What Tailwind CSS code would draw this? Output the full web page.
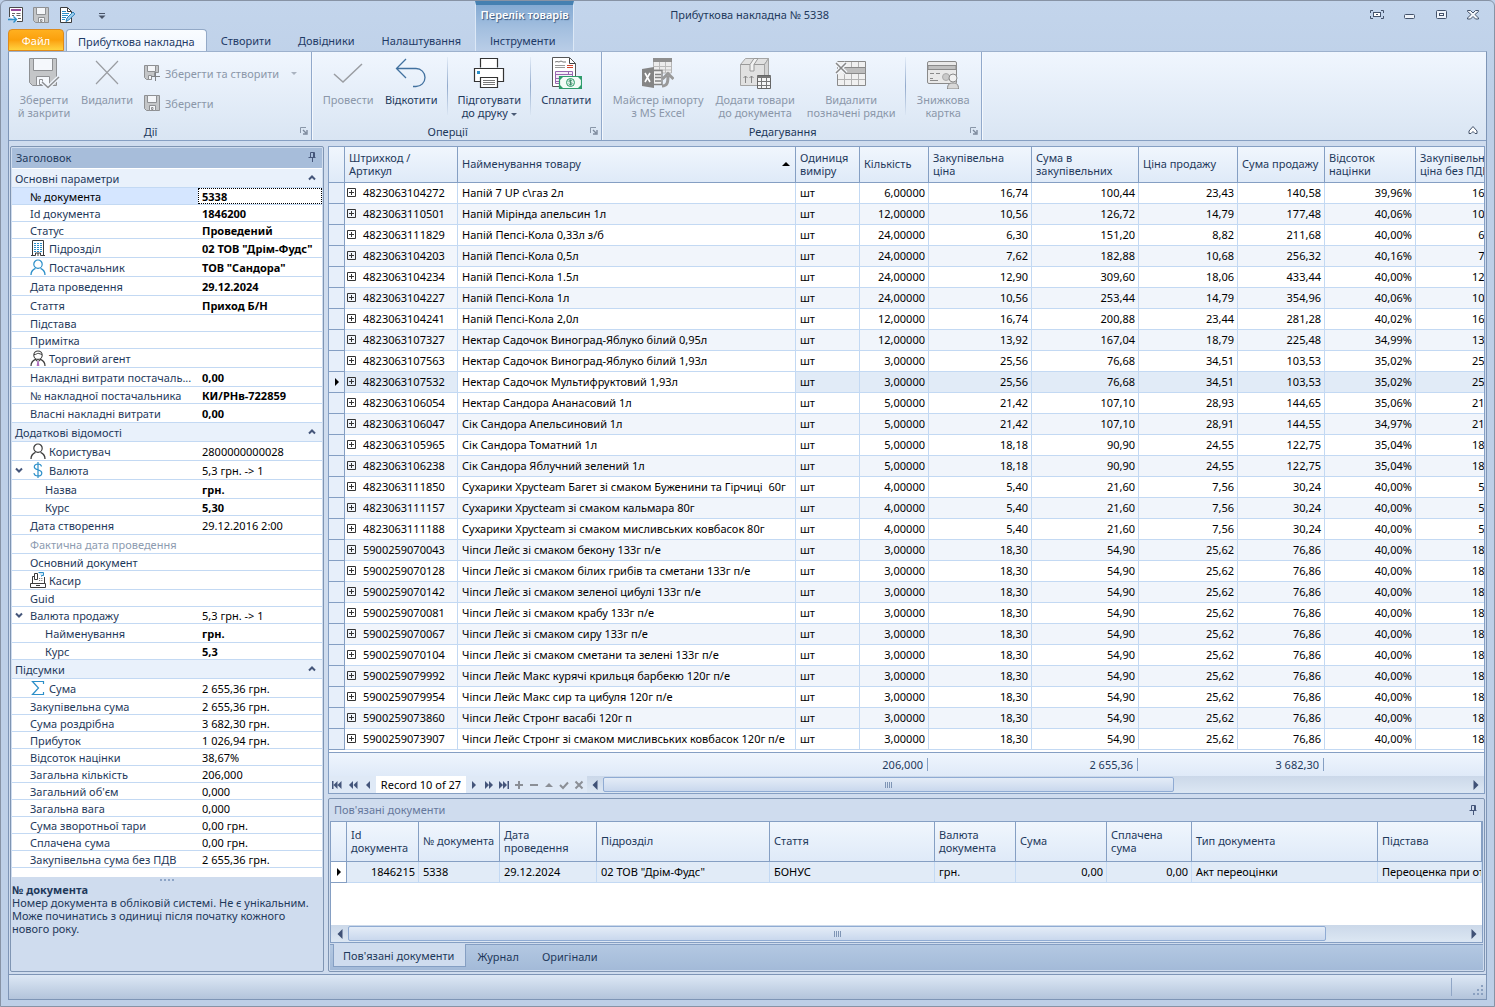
<!DOCTYPE html>
<html lang="uk">
<head>
<meta charset="utf-8">
<title>Прибуткова накладна № 5338</title>
<script src="https://cdn.jsdelivr.net/npm/@tailwindcss/browser@4"></script>
</head>
<body class="bg-[#bed0e8] font-['Noto_Sans',sans-serif] text-[11px] leading-[13px] text-[#1e395b]">
<svg class="hidden" xmlns="http://www.w3.org/2000/svg">
  <symbol id="floppy" viewBox="0 0 16 16"><path d="M.5.5h15v15h-13l-2-2z" fill="#c4c6c8" stroke="#8e9093"/><path d="M3.500.5h9v7h-9z" fill="#f4f6f9" stroke="#8e9093"/><path d="M5.500 10.500h6v5h-6z" fill="#f4f6f9" stroke="#8e9093"/><path d="M7.500 12.500h1.500v2h-1.500z" fill="none" stroke="#8e9093"/></symbol>
  <symbol id="person" viewBox="0 0 16 16"><circle cx="8" cy="5.200" r="4.200" fill="none" stroke="currentColor" stroke-width="1.200"/><path d="M1 16c0-4 2-5.500 4.500-6.600M15 16c0-4-2-5.500-4.500-6.600" fill="none" stroke="currentColor" stroke-width="1.300"/></symbol>
  <symbol id="agent" viewBox="0 0 16 16"><path d="M7.300 11l-.6 5h2.600l-.6-5z" fill="#b06fc0"/><circle cx="8" cy="5.200" r="4.200" fill="none" stroke="#3c3c3c" stroke-width="1.100"/><path d="M4 4.500c2 .3 3-1.200 4.200-1.200S11 4.500 12 4.500" fill="none" stroke="#3c3c3c"/><path d="M1 16c0-4 2-5.500 4.500-6.600l1.800 1.800M15 16c0-4-2-5.500-4.500-6.600l-1.800 1.800" fill="none" stroke="#3c3c3c" stroke-width="1.200"/></symbol>
  <symbol id="building" viewBox="0 0 16 16"><path d="M2.500 15V.5h11V15M1 15.500h4.500v-2.500h5v2.500H15M8 13v3" fill="none" stroke="#3c3c3c"/><path d="M4 3.500h2M7 3.500h2M10 3.500h2M4 5.500h2M7 5.500h2M10 5.500h2M4 7.500h2M7 7.500h2M10 7.500h2M4 9.500h2M7 9.500h2M10 9.500h2M4 11.500h2M7 11.500h2M10 11.500h2" stroke="#2b8fc9"/></symbol>
  <symbol id="dollar" viewBox="0 0 16 16"><path d="M11.500 4.500C11.200 2.800 9.800 2 8 2 5.800 2 4.300 3.200 4.300 4.900 4.300 8.500 11.800 7 11.800 10.900 11.800 12.800 10.200 14 8 14 5.800 14 4.200 13 4 11M8 0v16" fill="none" stroke="#2b8fc9" stroke-width="1.200"/></symbol>
  <symbol id="cash" viewBox="0 0 16 16"><path d="M.5 11.500h15v4H.5zM2.500 11V4.500h2M14.500 11V5M6 13.500h4" fill="none" stroke="#3c3c3c"/><path d="M4.500 1.500h3v6h-3z" fill="#fff" stroke="#3c3c3c"/><path d="M8.500.5h5v3h-2v1" fill="#cfe6f5" stroke="#2b8fc9"/><path d="M9 6.500h4M9 8.500h4" stroke="#777" stroke-dasharray="1 .8"/></symbol>
  <symbol id="sigma" viewBox="0 0 16 16"><path d="M13.500 4V1.500H2.500L8.500 8l-6 6.500h11V12" fill="none" stroke="#2b8fc9" stroke-width="1.200"/></symbol>
  <symbol id="pin" viewBox="0 0 8 10"><path d="M2.500 5V.5h4V5M5.500 1v4M.5 5.500h7M4.500 6v4" fill="none" stroke="#45567a"/></symbol>
  <symbol id="launcher" viewBox="0 0 8 8"><path d="M.5 6V.5H6" fill="none" stroke="#8996a8"/><path d="M3 3l3 3M7 3v4H3" fill="none" stroke="#7c899c" stroke-width="1.400"/></symbol>
  <symbol id="up" viewBox="0 0 8 6"><path d="M1 4.500L4 1.500l3 3" fill="none" stroke="#45567a" stroke-width="2"/></symbol>
  <symbol id="down" viewBox="0 0 8 6"><path d="M1 1.500l3 3 3-3" fill="none" stroke="#45567a" stroke-width="2"/></symbol>
  <symbol id="left" viewBox="0 0 6 10"><path d="M5.500 0v10L.5 5z" fill="#3f5176"/></symbol>
  <symbol id="right" viewBox="0 0 6 10"><path d="M.5 0v10l5-5z" fill="#3f5176"/></symbol>
</svg>

<div class="flex min-h-screen flex-col rounded-t-md border border-[#8793a5] bg-linear-to-b from-[#c3d5ec] to-[#bdcfe7] to-10% px-[7px] pb-[6px]">

  <!-- Title bar and tabs -->
  <header class="flex h-[50px] items-stretch">
    <div class="flex flex-col">
      <div class="flex h-7 items-center">
        <button class="h-4 w-4" aria-label="Перейти"><svg class="h-4 w-4" viewBox="0 0 16 16"><path d="M1.500 10V.5h13v14H9" fill="#fff" stroke="#4a4a4a"/><path d="M3 3h10" stroke="#96479a" stroke-width="2"/><path d="M4 6.500h3M4 8.500h2M8.500 6.500h4M8.500 8.500h4M10 11.500h3" stroke="#666"/><path d="M0 12.500h8M5.500 9.500l3 3-3 3" fill="none" stroke="#2b8fc9" stroke-width="1.400"/></svg></button>
        <button class="ml-[9px] h-4 w-4" aria-label="Зберегти" disabled><svg class="h-4 w-4"><use href="#floppy"/></svg></button>
        <button class="ml-[10px] h-4 w-4" aria-label="Редагувати"><svg class="h-4 w-4" viewBox="0 0 16 16"><path d="M1.500.5h7l4 4v11h-11z" fill="#fff" stroke="#3c3c3c"/><path d="M8.500 1v3.500h4" fill="none" stroke="#3c3c3c"/><path d="M3 4.500h4M3 6.500h7M3 8.500h6M3 10.500h4M3 12.500h3" stroke="#2b8fc9"/><path d="M7 14.500l1-3.500 6-6 1.800 2-6 6z" fill="#9fd0ee" stroke="#2b7fb9"/></svg></button>
        <button class="ml-[21px] h-4 w-3" aria-label="Налаштувати панель"><svg class="h-4 w-3" viewBox="0 0 12 16"><path d="M3 6.500h6" stroke="#4a5568"/><path d="M2.500 8.500h7L6 12z" fill="#4a5568"/></svg></button>
      </div>
      <nav class="flex h-[22px] text-[#1e3a66]">
        <button class="w-14 rounded-t-sm border border-[#dd8a1c] bg-linear-to-b from-[#ffb01f] via-[#fba00a] to-[#ffd23c] text-white">Файл</button>
        <button class="ml-0.5 h-[23px] rounded-t-sm border border-b-0 border-[#93a9c7] bg-linear-to-b from-[#f9fcff] to-[#f0f6fe] px-[11px]">Прибуткова накладна</button>
        <button class="px-[14px]">Створити</button>
        <button class="px-[13px]">Довідники</button>
        <button class="px-[14px]">Налаштування</button>
      </nav>
    </div>
    <div class="flex w-[99px] flex-col border-x border-[#dce8f6] border-t-4 border-t-[#4580b1] bg-linear-to-b from-[#84aad3] via-[#a3bfdf] to-[#b9cde7]">
      <div class="flex h-6 items-start justify-center pt-[3px] font-semibold whitespace-nowrap text-white text-shadow-[1px_1px_1px_#33557f]">Перелік товарів</div>
      <button class="h-[22px] pr-1 text-[#1e3a66]">Інструменти</button>
    </div>
    <h1 class="ml-24 flex-1 pt-[7px]">Прибуткова накладна № 5338</h1>
    <div class="flex h-7 items-center gap-4 pr-[6px]">
      <button class="h-4 w-4" aria-label="На весь екран"><svg class="h-4 w-4" viewBox="0 0 16 16"><path d="M4 3.500H1.500V6M12 3.500h2.500V6M4 11.500H1.500V9M12 11.500h2.500V9" fill="none" stroke="#44536b"/><rect x="4.500" y="5.500" width="7" height="4" fill="#fff" stroke="#44536b"/><path d="M7 7.500h2" stroke="#44536b"/></svg></button>
      <button class="h-4 w-4" aria-label="Згорнути"><svg class="h-4 w-4" viewBox="0 0 16 16"><rect x="3.500" y="7.500" width="10" height="4" rx="1" fill="#eef3fa" stroke="#44536b"/></svg></button>
      <button class="h-4 w-4" aria-label="Розгорнути"><svg class="h-4 w-4" viewBox="0 0 16 16"><rect x="3.500" y="3.500" width="10" height="8" rx="1" fill="#eef3fa" stroke="#44536b"/><rect x="6.500" y="6.500" width="4" height="2" fill="#fff" stroke="#44536b"/></svg></button>
      <button class="h-4 w-4" aria-label="Закрити"><svg class="h-4 w-4" viewBox="0 0 16 16"><path d="M2.500 3.500h3L8 6l2.500-2.500h3v1L10 7.500l3.500 3.500v1h-3L8 9.500 5.500 12h-3v-1L6 7.500 2.500 4.500z" fill="#f4f7fb" stroke="#44536b"/></svg></button>
    </div>
  </header>

  <div class="flex flex-1 flex-col border border-[#7e95b6] border-t-[#9db1cd] bg-[#cfdcee]">

    <!-- Ribbon -->
    <div class="flex h-[89px] border-b border-[#869fc2] bg-linear-to-b from-[#f0f6fe] to-[#d9e5f3]">
      <section class="flex flex-col border-r border-[#91a9cb] pr-[3px]">
        <div class="flex flex-1 items-start pt-[5px] pl-1 text-[#8b97a9]">
          <button disabled class="flex w-[62px] flex-col items-center gap-1"><svg class="h-8 w-8" viewBox="0 0 32 32"><path d="M1.500 1.500h27v27h-24l-3-3z" fill="#c4c6c8" stroke="#8e9093"/><path d="M5.500 1.500h19v12h-19z" fill="#f5f8fc" stroke="#8e9093"/><path d="M8.500 19.500h13v9h-13z" fill="#f5f8fc" stroke="#8e9093"/><path d="M11.500 22.500h3v5h-3z" fill="none" stroke="#8e9093"/><path d="M14 25l6 5.500L31 20" fill="none" stroke="#f1f6fd" stroke-width="4"/><path d="M14 25l6 5.500L31 20" fill="none" stroke="#8e9093" stroke-width="1.500"/></svg><span>Зберегти<br>й закрити</span></button>
          <button disabled class="flex w-[64px] flex-col items-center gap-1"><svg class="h-8 w-8" viewBox="0 0 32 32"><path d="M5 4l22 23M27 4L5 27" stroke="#9a9da2" stroke-width="1.200"/></svg><span>Видалити</span></button>
          <div class="flex flex-col gap-[14px] pt-2 pl-[5px]">
            <button disabled class="flex items-center gap-[5px]"><svg class="h-4 w-4" viewBox="0 0 16 16"><path d="M.5.5h14v7h-4v4h-3v3h-5l-2-2z" fill="#c4c6c8" stroke="#8e9093"/><path d="M3.500.5h8v6h-8z" fill="#f4f6f9" stroke="#8e9093"/><path d="M4.500 10.500h3v4h-3z" fill="#f4f6f9" stroke="#8e9093"/><path d="M11.500 7v9M7 11.500h9" stroke="#7f8286"/></svg>Зберегти та створити<svg class="ml-1 h-4 w-3" viewBox="0 0 12 16"><path d="M3 7h6l-3 3z" fill="#aab3c0"/></svg></button>
            <button disabled class="flex items-center gap-[5px]"><svg class="h-4 w-4"><use href="#floppy"/></svg>Зберегти</button>
          </div>
          <span class="w-2"></span>
        </div>
        <div class="flex h-4 items-center pb-0.5"><span class="flex-1 pr-2 text-center">Дії</span><button aria-label="Дії" class="h-2 w-2"><svg class="h-2 w-2"><use href="#launcher"/></svg></button></div>
      </section>
      <section class="flex flex-col border-r border-l border-r-[#91a9cb] border-l-[#f4f8fd] pr-[3px]">
        <div class="flex flex-1 items-start pt-[5px] pl-[5px]">
          <button disabled class="flex w-[60px] flex-col items-center gap-1 text-[#8b97a9]"><svg class="h-8 w-8" viewBox="0 0 32 32"><path d="M2 17l9 8L30 7" fill="none" stroke="#9a9da2" stroke-width="1.500"/></svg><span>Провести</span></button>
          <button class="flex w-[66px] flex-col items-center gap-1"><svg class="h-8 w-8" viewBox="0 0 32 32"><path d="M11 2L1.500 11.500 11 21M1.500 11.500H21c5 0 9 4 9 9s-4 9-9 9h-3" fill="none" stroke="#41719f" stroke-width="1.300"/></svg><span>Відкотити</span></button>
          <span class="ml-[3px] h-[58px] w-px bg-linear-to-b from-[#e4edf8] via-[#91a9cb] to-[#dbe6f3]"></span>
          <button class="ml-[3px] flex w-[76px] flex-col items-center gap-1"><svg class="h-8 w-8" viewBox="0 0 32 32"><path d="M7.500 10.500v-9h17v9" fill="#fff" stroke="#333" stroke-width="1.200"/><path d="M1.500 11.500h29v13h-29z" fill="#fff" stroke="#333" stroke-width="1.200"/><path d="M4 14h3v3H4z" fill="#2b8fc9"/><path d="M7.500 20.500h17v10h-17z" fill="#fff" stroke="#333" stroke-width="1.200"/><path d="M10 23.500h12M10 25.500h12M10 27.500h12" stroke="#777"/></svg><span>Підготувати<br>до друку <span class="inline-block h-0 w-0 border-x-3 border-t-3 border-x-transparent border-t-[#4a5a75] align-middle"></span></span></button>
          <span class="ml-[3px] h-[58px] w-px bg-linear-to-b from-[#e4edf8] via-[#91a9cb] to-[#dbe6f3]"></span>
          <button class="ml-1 flex w-[62px] flex-col items-center gap-1"><svg class="h-8 w-8" viewBox="0 0 32 32"><path d="M2.500.5h17l6 6v23h-23z" fill="#fff" stroke="#555"/><path d="M19.500 1v5.500h6" fill="none" stroke="#444"/><path d="M5 5l2-.5 2 .5 2-1 2 1h3" fill="none" stroke="#777"/><path d="M5 8.500h10M5 10.500h10" stroke="#999"/><path d="M17 8.500h6M17 10.500h6" stroke="#d0432c"/><path d="M5.500 14.500h17v12h-17zM5.500 17.500h17M18.500 14v3" fill="#f5eef8" stroke="#9a67b0"/><path d="M5 21.500h6M5 24.500h6" stroke="#9a67b0"/><path d="M9.500 19.500h22v12h-22z" fill="#f3fbf6" stroke="#2f9c6b" stroke-width="1.200"/><path d="M10 20h3l-3 3zM31 20h-3l3 3zM10 31h3l-3-3zM31 31h-3l3-3z" fill="#2f9c6b"/><circle cx="20.500" cy="25.500" r="4" fill="#d9f0e4" stroke="#2f9c6b"/><path d="M22 24c-1-1.200-3.300-1-3 .3s3.200 1 3 2.400-2.500 1.300-3.300 0M20.500 22.500v6" fill="none" stroke="#2f7c5b" stroke-width=".8"/></svg><span>Сплатити</span></button>
          <span class="w-px"></span>
        </div>
        <div class="flex h-4 items-center pb-0.5"><span class="flex-1 pr-2 text-center">Оперції</span><button aria-label="Оперції" class="h-2 w-2"><svg class="h-2 w-2"><use href="#launcher"/></svg></button></div>
      </section>
      <section class="flex flex-col border-r border-l border-r-[#91a9cb] border-l-[#f4f8fd] pr-[3px]">
        <div class="flex flex-1 items-start pt-[5px] pl-[7px] text-[#8b97a9]">
          <button disabled class="flex w-24 flex-col items-center gap-1"><svg class="h-8 w-8" viewBox="0 0 32 32"><path d="M11.500 2h18v14h-18z" fill="#ececec" stroke="#b5b5b5"/><path d="M11 1h19v4H11z" fill="#8f8f8f"/><path d="M11 9.500h18M11 13h18M17.500 5v11M23.500 5v11" stroke="#bbb"/><path d="M12 13.500h8v14h-8" fill="#f2f2f2" stroke="#858585" stroke-width="1.400"/><path d="M0 12l12-2v21L0 29z" fill="#858585"/><path d="M3 16l5 9M8 16l-5 9" stroke="#fff" stroke-width="1.600"/><path d="M13 17.500h6M13 20.500h6M13 24h6" stroke="#858585" stroke-width="1.600"/><path d="M20 29c5 0 6-3 6-10M20.500 22l5.500-5.500 5.500 5.500" fill="none" stroke="#999" stroke-width="3"/></svg><span>Майстер імпорту<br>з MS Excel</span></button>
          <button disabled class="flex w-[98px] flex-col items-center gap-1"><svg class="h-8 w-8" viewBox="0 0 32 32"><path d="M1.500 7.500l5-6h23l-4 6v21h-24z" fill="#e1e1e1" stroke="#a5a5a5"/><path d="M25.500 7.500l4-6v20l-4 6z" fill="#d4d4d4" stroke="#a5a5a5"/><path d="M1.500 7.500h24" stroke="#999"/><path d="M11 14V7.500l4-6h4l-4 6V14z" fill="#f3f3f3" stroke="#999"/><path d="M6.500 26v-7M4.500 21l2-2 2 2M12.500 26v-7M10.500 21l2-2 2 2" fill="none" stroke="#888"/><path d="M18.500 18.500h13v13h-13z" fill="#f5f5f5" stroke="#666"/><path d="M18 20h14" stroke="#777" stroke-width="2"/><path d="M19 24.500h12M19 28.500h12M22.500 21v10M27.500 21v10" stroke="#777"/></svg><span>Додати товари<br>до документа</span></button>
          <button disabled class="flex w-[94px] flex-col items-center gap-1"><svg class="h-8 w-8" viewBox="0 0 32 32"><path d="M2.500 4.500h28v24h-28z" fill="#f0f0f0" stroke="#8a8a8a"/><path d="M3 10.500h27M3 22.500h27M9.500 5v5M16.500 5v5M23.500 5v5M9.500 17v11M16.500 17v11M23.500 17v11" stroke="#b2b2b2"/><path d="M9 10.500h21.500v6H9z" fill="#bdbdbd" stroke="#8a8a8a"/><path d="M1 6l10 10M11 6L1 16" stroke="#f4f7fb" stroke-width="4"/><path d="M1 6l10 10M11 6L1 16" stroke="#888" stroke-width="1.500"/></svg><span>Видалити<br>позначені рядки</span></button>
          <span class="ml-[7px] h-[58px] w-px bg-linear-to-b from-[#e4edf8] via-[#91a9cb] to-[#dbe6f3]"></span>
          <button disabled class="ml-[7px] flex w-[60px] flex-col items-center gap-1"><svg class="h-8 w-8" viewBox="0 0 32 32"><rect x=".5" y="4.500" width="29" height="22" rx="1.500" fill="#e9e9e9" stroke="#8a8a8a"/><path d="M1 8.500h28v4H1z" fill="#c0c0c0" stroke="#8a8a8a"/><path d="M3 16.500h4M9 16.500h4M3 21.500h3M3 23.500h8" stroke="#8a8a8a"/><circle cx="19" cy="20" r="3.500" fill="#c9c9c9" stroke="#aaa"/><path d="M20.500 32c0-5 2-6 5.500-6s5.500 1 5.500 6z" fill="#d8d8d8" stroke="#8a8a8a"/><circle cx="26" cy="21" r="4" fill="#f0f0f0" stroke="#8a8a8a"/></svg><span>Знижкова<br>картка</span></button>
          <span class="w-[5px]"></span>
        </div>
        <div class="flex h-4 items-center pb-0.5"><span class="flex-1 pr-2 text-center">Редагування</span><button aria-label="Редагування" class="h-2 w-2"><svg class="h-2 w-2"><use href="#launcher"/></svg></button></div>
      </section>
      <div class="flex flex-1 items-end justify-end border-l border-[#f4f8fd] pr-2 pb-[5px]">
        <button aria-label="Згорнути стрічку" class="h-2.5 w-2.5"><svg class="h-2.5 w-2.5" viewBox="0 0 10 10"><path d="M1 6l4-4.500L9 6v2.500H7L5 6.500 3 8.500H1z" fill="#fff" stroke="#44536b"/></svg></button>
      </div>
    </div>

    <!-- Work area -->
    <main class="flex flex-1 gap-1 px-[1px] pt-[5px] pb-0.5">

      <!-- Property panel -->
      <aside class="flex w-[314px] shrink-0 flex-col rounded-xs border border-[#7f95b3] p-px">
        <div class="flex h-5 items-center bg-[#a7bdda] pr-[6px] pb-0.5 pl-1"><h2 class="flex-1">Заголовок</h2><button aria-label="Закріпити" class="h-2.5 w-2"><svg class="h-2.5 w-2"><use href="#pin"/></svg></button></div>
        <div id="props" class="h-[709px] bg-white pt-px"></div>
        <div class="flex-1 text-[#1e395b]">
          <div class="flex h-[6px] items-center justify-center gap-[2px]"><i class="h-0.5 w-0.5 bg-[#8ea5c6]"></i><i class="h-0.5 w-0.5 bg-[#8ea5c6]"></i><i class="h-0.5 w-0.5 bg-[#8ea5c6]"></i><i class="h-0.5 w-0.5 bg-[#8ea5c6]"></i></div>
          <h3 class="font-bold">№ документа</h3>
          <p>Номер документа в обліковій системі. Не є унікальним. Може починатись з одиниці після початку кожного нового року.</p>
        </div>
      </aside>

      <div class="flex min-w-0 flex-1 flex-col">
        <!-- Goods grid -->
        <section class="flex flex-col border border-[#859fc3] bg-white">
          <div class="h-[605px] overflow-hidden">
            <table class="w-[calc(100%+20px)] table-fixed border-separate border-spacing-0 whitespace-nowrap text-black">
              <colgroup><col class="w-4"><col class="w-[113px]"><col class="w-[338px]"><col class="w-16"><col class="w-[69px]"><col class="w-[103px]"><col class="w-[107px]"><col class="w-[99px]"><col class="w-[87px]"><col class="w-[91px]"><col></colgroup>
              <thead><tr id="ghead" class="h-9"></tr></thead>
              <tbody id="gbody"></tbody>
            </table>
          </div>
          <div class="flex h-6 items-center border-t border-[#859fc3] bg-linear-to-b from-[#eff5fd] to-[#dfeaf8]">
            <span class="w-[599px] border-r border-[#859fc3] pr-1 text-right">206,000</span>
            <span class="w-[210px] border-r border-[#859fc3] pr-1 text-right">2 655,36</span>
            <span class="w-[186px] border-r border-[#859fc3] pr-1 text-right">3 682,30</span>
          </div>
          <div class="flex h-[17px] items-center bg-[#dfe9f6]">
            <div id="nav1" class="flex w-[47px]"></div>
            <output class="h-[17px] w-[90px] bg-white pt-0.5 text-center text-black">Record 10 of 27</output>
            <div id="nav2" class="flex w-[121px]"></div>
            <div class="flex h-[17px] flex-1 items-center bg-linear-to-b from-[#cbd8e9] to-[#dce7f3]">
              <button aria-label="Прокрутити ліворуч" class="flex w-4 justify-center"><svg class="h-2.5 w-1.5"><use href="#left"/></svg></button>
              <div class="flex-1"><div class="flex h-[15px] w-[66%] items-center justify-center gap-px rounded-xs border border-[#8fabd3] bg-linear-to-b from-[#e4ecf7] to-[#c9d8ed]"><i class="h-1.5 w-px bg-[#7f95b5]"></i><i class="h-1.5 w-px bg-[#7f95b5]"></i><i class="h-1.5 w-px bg-[#7f95b5]"></i><i class="h-1.5 w-px bg-[#7f95b5]"></i></div></div>
              <button aria-label="Прокрутити праворуч" class="flex w-4 justify-center"><svg class="h-2.5 w-1.5"><use href="#right"/></svg></button>
            </div>
          </div>
        </section>

        <!-- Linked documents -->
        <section class="mt-1 flex flex-1 flex-col rounded-xs border border-[#7f95b3] p-px">
          <div class="flex h-[21px] items-center pr-[6px] pb-0.5 pl-1 text-[#66789c]"><h2 class="flex-1">Пов'язані документи</h2><button aria-label="Закріпити" class="h-2.5 w-2"><svg class="h-2.5 w-2"><use href="#pin"/></svg></button></div>
          <div class="flex flex-1 flex-col border border-[#859fc3] bg-white">
            <div class="flex-1 overflow-hidden">
              <table class="w-full table-fixed border-separate border-spacing-0 whitespace-nowrap text-black">
                <colgroup><col class="w-4"><col class="w-[72px]"><col class="w-[81px]"><col class="w-[97px]"><col class="w-[173px]"><col class="w-[165px]"><col class="w-[81px]"><col class="w-[91px]"><col class="w-[85px]"><col class="w-[186px]"><col></colgroup>
                <thead><tr id="dhead" class="h-10"></tr></thead>
                <tbody id="dbody"></tbody>
              </table>
            </div>
            <div class="flex h-[17px] items-center bg-linear-to-b from-[#cbd8e9] to-[#dce7f3]">
              <button aria-label="Прокрутити ліворуч" class="flex w-[17px] justify-center"><svg class="h-2.5 w-1.5"><use href="#left"/></svg></button>
              <div class="flex-1"><div class="flex h-[15px] w-7/8 items-center justify-center gap-px rounded-xs border border-[#8fabd3] bg-linear-to-b from-[#e4ecf7] to-[#c9d8ed]"><i class="h-1.5 w-px bg-[#7f95b5]"></i><i class="h-1.5 w-px bg-[#7f95b5]"></i><i class="h-1.5 w-px bg-[#7f95b5]"></i><i class="h-1.5 w-px bg-[#7f95b5]"></i></div></div>
              <button aria-label="Прокрутити праворуч" class="flex w-4 justify-center"><svg class="h-2.5 w-1.5"><use href="#right"/></svg></button>
            </div>
          </div>
          <div class="mt-px flex h-[26px] items-start border-t border-[#859fc3] bg-linear-to-b from-[#b3c8e2] to-[#a3bad8] pl-[3px]">
            <button class="-mt-px h-[23px] border border-t-0 border-[#859fc3] bg-[#cfdcee] pr-[11px] pl-[9px]">Пов'язані документи</button>
            <button class="h-[22px] px-[11px]">Журнал</button>
            <button class="h-[22px] px-3">Оригінали</button>
          </div>
        </section>
      </div>
    </main>

    <!-- Status bar -->
    <footer class="flex h-[25px] justify-end border-t border-[#7e95b6] bg-linear-to-b from-[#dde8f5] to-[#b3c4db]">
      <span class="my-[3px] w-px bg-[#90a6c6]"></span>
      <svg class="mt-[9px] mr-[2px] ml-5 h-3 w-3" viewBox="0 0 12 12"><path d="M9 1h2v2H9zM5 5h2v2H5zM9 5h2v2H9zM1 9h2v2H1zM5 9h2v2H5zM9 9h2v2H9z" fill="#8aa0c0"/></svg>
    </footer>
  </div>
</div>

<script>
// [kind, label, value, options]: s = section, r = short row, t = tall row
const props = [
 ['s','Основні параметри'],
 ['r','№ документа','5338',{sel:1,b:1}],['r','Id документа','1846200',{b:1}],['r','Статус','Проведений',{b:1}],
 ['t','Підрозділ','02 ТОВ "Дрім-Фудс"',{b:1,icon:'building'}],['t','Постачальник','ТОВ "Сандора"',{b:1,icon:'person',blue:1}],
 ['t','Дата проведення','29.12.2024',{b:1}],['t','Стаття','Приход Б/Н',{b:1}],['r','Підстава',''],['r','Примітка',''],
 ['t','Торговий агент','',{icon:'agent'}],['t','Накладні витрати постачаль...','0,00',{b:1}],['r','№ накладної постачальника','КИ/РНв-722859',{b:1}],
 ['t','Власні накладні витрати','0,00',{b:1}],
 ['s','Додаткові відомості'],
 ['t','Користувач','2800000000028',{icon:'person'}],['t','Валюта','5,3 грн. -> 1',{icon:'dollar',open:1}],
 ['t','Назва','грн.',{b:1,child:1}],['r','Курс','5,30',{b:1,child:1}],['t','Дата створення','29.12.2016 2:00'],
 ['t','Фактична дата проведення','',{off:1}],['r','Основний документ',''],['t','Касир','',{icon:'cash'}],['r','Guid',''],
 ['r','Валюта продажу','5,3 грн. -> 1',{open:1}],['t','Найменування','грн.',{b:1,child:1}],['r','Курс','5,3',{b:1,child:1}],
 ['s','Підсумки'],
 ['t','Сума','2 655,36 грн.',{icon:'sigma'}],['r','Закупівельна сума','2 655,36 грн.'],['r','Сума роздрібна','3 682,30 грн.'],
 ['r','Прибуток','1 026,94 грн.'],['r','Відсоток націнки','38,67%'],['r','Загальна кількість','206,000'],["r","Загальний об'єм",'0,000'],
 ['r','Загальна вага','0,000'],['r','Сума зворотньої тари','0,00 грн.'],['r','Сплачена сума','0,00 грн.'],['r','Закупівельна сума без ПДВ','2 655,36 грн.']
];
document.getElementById('props').innerHTML = props.map(([k,label,value,o={}]) => {
  if (k === 's') return `<div class="flex h-[19px] items-center border-b border-[#c3d9f3] bg-[#e9f1fb] pr-[6px] pl-[3px]"><h3 class="flex-1">${label}</h3><button aria-label="Згорнути розділ"><svg class="h-1.5 w-2"><use href="#up"/></svg></button></div>`;
  const mark = o.open ? '<button aria-label="Згорнути" class="mr-[7px] ml-[3px]"><svg class="h-1.5 w-2"><use href="#down"/></svg></button>' : `<span class="shrink-0 ${o.child ? 'w-[33px]' : 'w-[18px]'}"></span>`;
  const icon = o.icon ? `<svg class="mr-[3px] h-4 w-4 shrink-0 ${o.blue ? 'text-[#2b8fc9]' : 'text-[#3c3c3c]'}"><use href="#${o.icon}"/></svg>` : '';
  const val = o.sel ? `<input aria-label="${label}" value="${value}" class="h-full min-w-0 flex-1 border border-dotted border-black bg-white px-[3px] font-bold text-black outline-none">`
    : `<span class="flex-1 self-center pl-1 whitespace-nowrap text-black ${o.b ? 'font-bold' : ''}">${value}</span>`;
  return `<div class="flex border-b border-[#c3d9f3] ${k === 't' ? 'h-[19px]' : 'h-[17px]'}"><div class="flex w-[186px] shrink-0 items-center whitespace-nowrap ${o.sel ? 'bg-[#d5e6ff] text-black' : ''} ${o.off ? 'text-[#8d9bb0]' : ''}">${mark}${icon}<span>${label}</span></div>${val}</div>`;
}).join('');

const th = (t, extra='') => `<th scope="col" class="border-r border-b border-[#859fc3] bg-linear-to-b from-[#f0f6fd] to-[#dfeaf8] px-1 pb-0.5 text-left font-normal text-[#1e395b]"><div class="flex items-center justify-between"><span>${t}</span>${extra}</div></th>`;
document.getElementById('ghead').innerHTML = ['','Штрихкод /<br>Артикул','Найменування товару','Одиниця<br>виміру','Кількість','Закупівельна<br>ціна','Сума в<br>закупівельних','Ціна продажу','Сума продажу','Відсоток<br>націнки','Закупівельна<br>ціна без ПДВ']
  .map((t,i) => th(t, i === 2 ? '<i class="mr-px h-0 w-0 border-x-4 border-b-4 border-x-transparent border-b-black"></i>' : '')).join('');

const goods = `4823063104272|Напій 7 UP с\\газ 2л|6|16,74|100,44|23,43|140,58|39,96
4823063110501|Напій Мірінда апельсин 1л|12|10,56|126,72|14,79|177,48|40,06
4823063111829|Напій Пепсі-Кола 0,33л з/б|24|6,30|151,20|8,82|211,68|40,00
4823063104203|Напій Пепсі-Кола 0,5л|24|7,62|182,88|10,68|256,32|40,16
4823063104234|Напій Пепсі-Кола 1.5л|24|12,90|309,60|18,06|433,44|40,00
4823063104227|Напій Пепсі-Кола 1л|24|10,56|253,44|14,79|354,96|40,06
4823063104241|Напій Пепсі-Кола 2,0л|12|16,74|200,88|23,44|281,28|40,02
4823063107327|Нектар Садочок Виноград-Яблуко білий 0,95л|12|13,92|167,04|18,79|225,48|34,99
4823063107563|Нектар Садочок Виноград-Яблуко білий 1,93л|3|25,56|76,68|34,51|103,53|35,02
4823063107532|Нектар Садочок Мультифруктовий 1,93л|3|25,56|76,68|34,51|103,53|35,02
4823063106054|Нектар Сандора Ананасовий 1л|5|21,42|107,10|28,93|144,65|35,06
4823063106047|Сік Сандора Апельсиновий 1л|5|21,42|107,10|28,91|144,55|34,97
4823063105965|Сік Сандора Томатний 1л|5|18,18|90,90|24,55|122,75|35,04
4823063106238|Сік Сандора Яблучний зелений 1л|5|18,18|90,90|24,55|122,75|35,04
4823063111850|Сухарики Хрусteam Багет зі смаком Буженини та Гірчиці&nbsp; 60г|4|5,40|21,60|7,56|30,24|40,00
4823063111157|Сухарики Хрусteam зі смаком кальмара 80г|4|5,40|21,60|7,56|30,24|40,00
4823063111188|Сухарики Хрусteam зі смаком мисливських ковбасок 80г|4|5,40|21,60|7,56|30,24|40,00
5900259070043|Чіпси Лейс зі смаком бекону 133г п/е
5900259070128|Чіпси Лейс зі смаком білих грибів та сметани 133г п/е
5900259070142|Чіпси Лейс зі смаком зеленої цибулі 133г п/е
5900259070081|Чіпси Лейс зі смаком крабу 133г п/е
5900259070067|Чіпси Лейс зі смаком сиру 133г п/е
5900259070104|Чіпси Лейс зі смаком сметани та зелені 133г п/е
5900259079992|Чіпси Лейс Макс курячі крильця барбекю 120г п/е
5900259079954|Чіпси Лейс Макс сир та цибуля 120г п/е
5900259073860|Чіпси Лейс Стронг васабі 120г п
5900259073907|Чіпси Лейс Стронг зі смаком мисливських ковбасок 120г п/е`.split('\n').map(l => { const c = l.split('|'); return c.length > 2 ? c : c.concat('3','18,30','54,90','25,62','76,86','40,00'); });
const arrow = '<i class="mx-auto block h-0 w-0 border-y-4 border-l-4 border-y-transparent border-l-black"></i>';
document.getElementById('gbody').innerHTML = goods.map((g,i) => {
  const on = i === 9, td = 'border-r border-b border-[#c3d9f3] pb-0.5';
  const num = t => `<td class="${td} pr-[3px] text-right">${t}</td>`;
  return `<tr class="h-[21px] ${on ? 'bg-[#e1ebf7]' : i % 2 ? 'bg-[#f1f5fb]' : 'bg-white'}"><td class="border-r border-b border-[#859fc3] bg-[#e7effa]">${on ? arrow : ''}</td>`
   + `<td class="${td}"><div class="flex items-center gap-[7px] pl-[2px]"><button aria-label="Розгорнути рядок" class="h-[9px] w-[9px]"><svg class="h-[9px] w-[9px]" viewBox="0 0 9 9"><path d="M.5.5h8v8h-8zM2 4.500h5M4.500 2v5" fill="none" stroke="#333"/></svg></button>${g[0]}</div></td>`
   + `<td class="${td} pl-1 ${on ? 'bg-white' : ''}">${g[1]}</td><td class="${td} pl-1">шт</td>${num(g[2] + ',00000')}${num(g[3])}${num(g[4])}${num(g[5])}${num(g[6])}${num(g[7] + '%')}${num(g[3])}</tr>`;
}).join('');

document.getElementById('dhead').innerHTML = ['','Id<br>документа','№ документа','Дата<br>проведення','Підрозділ','Стаття','Валюта<br>документа','Сума','Сплачена<br>сума','Тип документа','Підстава'].map(t => th(t)).join('');
document.getElementById('dbody').innerHTML = '<tr class="h-[21px] bg-[#e1ebf7]"><td class="border-r border-b border-[#859fc3] bg-white">' + arrow + '</td>'
 + ['1846215','5338','29.12.2024','02 ТОВ "Дрім-Фудс"','БОНУС','грн.','0,00','0,00','Акт переоцінки','Переоценка при отриманні'].map((t,i) =>
  `<td class="overflow-hidden border-r border-b border-[#c3d9f3] pb-0.5 ${[0,6,7].includes(i) ? 'pr-[3px] text-right' : 'pl-1'}">${t}</td>`).join('') + '</tr>';

const nav = (list) => list.map(([n,d]) => `<button aria-label="${n}" class="flex h-4 flex-1 items-center justify-center"><svg class="h-2.5 w-2.5" viewBox="0 0 10 10">${d}</svg></button>`).join('');
const dk = '#44557a', gr = '#8b8f96';
document.getElementById('nav1').innerHTML = nav([
 ['Перший',`<path d="M0 1h1.500v8H0zM5.500 1v8l-4-4zM9.500 1v8l-4-4z" fill="${dk}"/>`],
 ['Попередня сторінка',`<path d="M5 1v8L1 5zM9.500 1v8l-4-4z" fill="${dk}"/>`],
 ['Попередній',`<path d="M7 1v8L3 5z" fill="${dk}"/>`]]);
document.getElementById('nav2').innerHTML = nav([
 ['Наступний',`<path d="M3 1v8l4-4z" fill="${dk}"/>`],
 ['Наступна сторінка',`<path d="M1 1v8l4-4zM5 1v8l4-4z" fill="${dk}"/>`],
 ['Останній',`<path d="M0 1v8l4-4zM4 1v8l4-4zM8.500 1H10v8H8.500z" fill="${dk}"/>`],
 ['Додати',`<path d="M5 1v8M1 5h8" stroke="${gr}" stroke-width="2"/>`],
 ['Видалити',`<path d="M1 5h8" stroke="${gr}" stroke-width="2"/>`],
 ['Змінити',`<path d="M1 7h8L5 3z" fill="${gr}"/>`],
 ['Підтвердити',`<path d="M1 5l3 3 5-5.500" fill="none" stroke="${gr}" stroke-width="2"/>`],
 ['Скасувати',`<path d="M1.500 1.500l7 7M8.500 1.500l-7 7" stroke="${gr}" stroke-width="2"/>`]]);
</script>
</body>
</html>
